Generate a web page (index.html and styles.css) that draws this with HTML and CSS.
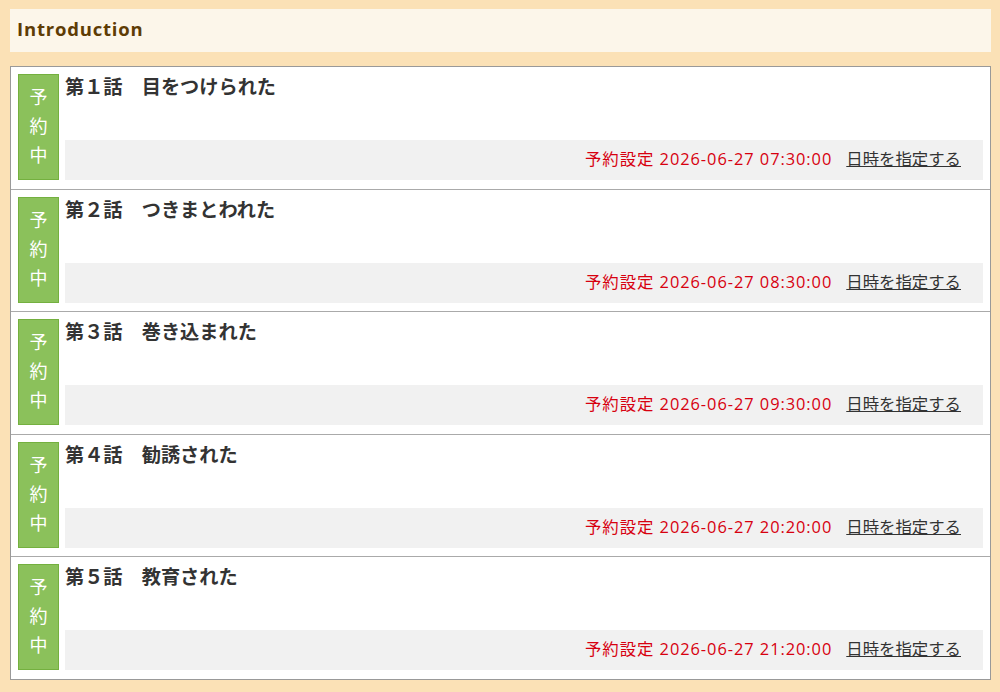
FILE: index.html
```html
<!DOCTYPE html>
<html lang="ja">
<head>
    <meta charset="UTF-8">
    <meta name="viewport" content="width=device-width, initial-scale=1.0">
    <title>Introduction</title>
    <link rel="stylesheet" href="styles.css">
</head>
<body>
    <h2 class="section-title">Introduction</h2>
    <ul class="episode-list">
        <li class="episode">
            <div class="status">予<br>約<br>中</div>
            <div class="episode-body">
                <h3 class="episode-title">第１話　目をつけられた</h3>
                <div class="schedule">
                    <span class="schedule-time">予約設定 2026-06-27 07:30:00</span>
                    <a href="#" class="schedule-link">日時を指定する</a>
                </div>
            </div>
        </li>
        <li class="episode">
            <div class="status">予<br>約<br>中</div>
            <div class="episode-body">
                <h3 class="episode-title">第２話　つきまとわれた</h3>
                <div class="schedule">
                    <span class="schedule-time">予約設定 2026-06-27 08:30:00</span>
                    <a href="#" class="schedule-link">日時を指定する</a>
                </div>
            </div>
        </li>
        <li class="episode">
            <div class="status">予<br>約<br>中</div>
            <div class="episode-body">
                <h3 class="episode-title">第３話　巻き込まれた</h3>
                <div class="schedule">
                    <span class="schedule-time">予約設定 2026-06-27 09:30:00</span>
                    <a href="#" class="schedule-link">日時を指定する</a>
                </div>
            </div>
        </li>
        <li class="episode">
            <div class="status">予<br>約<br>中</div>
            <div class="episode-body">
                <h3 class="episode-title">第４話　勧誘された</h3>
                <div class="schedule">
                    <span class="schedule-time">予約設定 2026-06-27 20:20:00</span>
                    <a href="#" class="schedule-link">日時を指定する</a>
                </div>
            </div>
        </li>
        <li class="episode">
            <div class="status">予<br>約<br>中</div>
            <div class="episode-body">
                <h3 class="episode-title">第５話　教育された</h3>
                <div class="schedule">
                    <span class="schedule-time">予約設定 2026-06-27 21:20:00</span>
                    <a href="#" class="schedule-link">日時を指定する</a>
                </div>
            </div>
        </li>
    </ul>
</body>
</html>
```

FILE: styles.css
```css
body {
    margin: 0;
    padding: 9px 9px 0 10px;
    background-color: #fbe1b6;
    font-family: "Open Sans", "Noto Sans CJK JP", sans-serif;
    color: #333;
}
.section-title {
    margin: 0 0 14px;
    padding: 0 7px;
    height: 43px;
    line-height: 39px;
    background-color: #fcf6ea;
    color: #5e3c05;
    font-size: 18.5px;
    font-weight: bold;
    letter-spacing: 0.8px;
}
.episode-list {
    margin: 0;
    padding: 0;
    list-style: none;
    border: 1px solid #999;
    background-color: #fff;
}
.episode {
    display: flex;
    gap: 6px;
    padding: 7px 7px 8.6px;
    border-top: 1px solid #aaa;
}
.episode:first-child {
    border-top: none;
}
.status {
    width: 39px;
    flex-shrink: 0;
    padding-top: 8px;
    background-color: #8bc15b;
    border: 1px solid #74b03f;
    color: #fff;
    font-size: 18px;
    line-height: 29px;
    text-align: center;
}
.episode-body {
    flex: 1;
    display: flex;
    flex-direction: column;
    justify-content: space-between;
    height: 106px;
}
.episode-title {
    margin: 0;
    font-size: 19.2px;
    font-weight: bold;
    line-height: 26px;
    color: #333;
}
.schedule {
    height: 40px;
    box-sizing: border-box;
    padding: 0 22px 4px 0;
    display: flex;
    align-items: center;
    justify-content: flex-end;
    gap: 14px;
    background-color: #f1f1f1;
    font-size: 16.4px;
}
.schedule-time {
    color: #d7000f;
    letter-spacing: 0.95px;
}
.schedule-link {
    color: #333;
    text-decoration: underline;
}
```
